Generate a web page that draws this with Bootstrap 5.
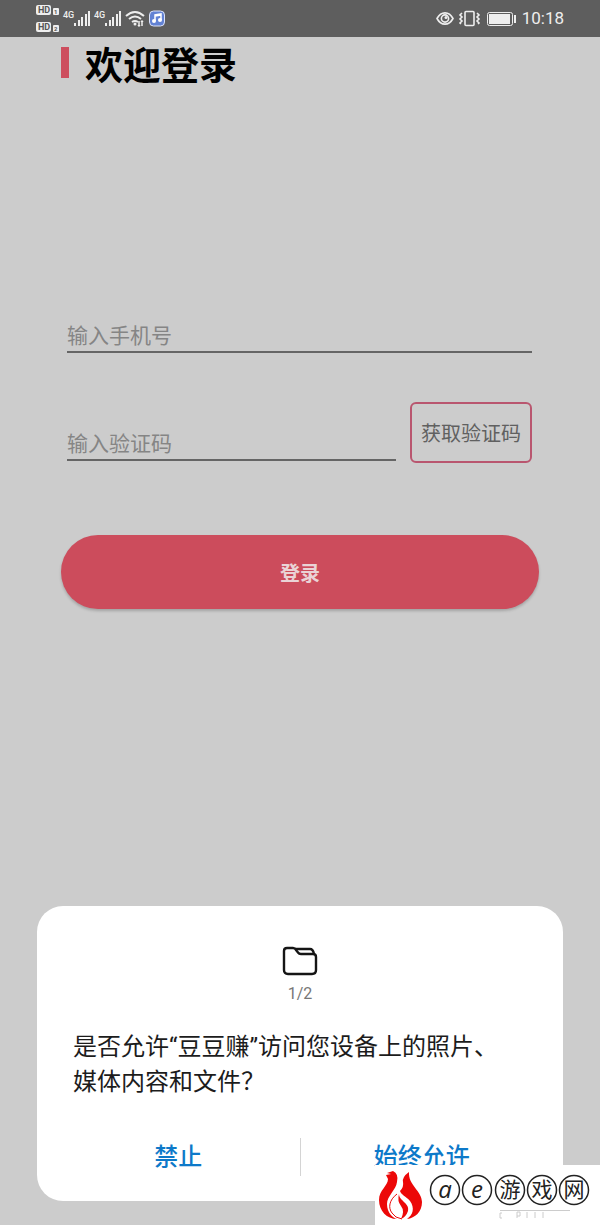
<!DOCTYPE html>
<html lang="zh-CN">
<head>
<meta charset="utf-8">
<meta name="viewport" content="width=device-width, initial-scale=1">
<title>欢迎登录</title>
<link href="https://cdn.jsdelivr.net/npm/bootstrap@5.3.0/dist/css/bootstrap.min.css" rel="stylesheet">
<style>
  body { background: #ccc; font-family: Roboto, "Noto Sans CJK SC", sans-serif; }
  .status-bar { height: 37px; background: #5e5e5e; color: #eee; padding: 0 36px; font-size: 17px; line-height: 37px; }
  .status-bar svg { display: block; flex: none; }
  .login { padding: 0 61px; }
  .title-bar { width: 8px; height: 31px; background: #cd4e5e; margin-top: 10px; }
  .login-title { font-size: 38px; line-height: 58px; font-weight: 700; color: #000; }
  .login-form { margin-top: 213px; }
  .fields { padding: 0 7px 0 6px; }
  .line-input { border: 0; border-bottom: 2px solid #656565; border-radius: 0; background: transparent; padding: 9px 0 0; height: 45px; font-family: "Noto Sans CJK SC", sans-serif; font-size: 21px; line-height: 34px; }
  .line-input:focus { background: transparent; box-shadow: none; border-color: #cd4e5e; }
  .line-input::placeholder { color: #858585; line-height: 34px; }
  .code-row { margin-top: 49px; }
  .code-gap { gap: 14px; }
  .code-field { padding-bottom: 2px; }
  .code-btn { width: 122px; height: 61px; border: 2px solid #b9566f; border-radius: 6px; padding: 3px 0 0; font-size: 20px; color: #606060; }
  .login-btn { height: 74px; margin-top: 72px; padding: 3px 0 0; background: #cc4c5c; color: #ead3d6; font-size: 20px; font-weight: 700; box-shadow: 0 2px 3px #0003; }
  .permission { margin: 48px 37px 24px; padding: 36px 36px 25px; background: #fff; border-radius: 26px; }
  .step { font-size: 16px; line-height: 24px; color: #777; margin-top: 2px; }
  .message { font-size: 24px; line-height: 35px; color: #1c1c1c; margin: 24px 0 38px; }
  .choice { color: #0d79c9; font-size: 24px; line-height: 36px; font-weight: 500; padding: 0; }
  .divider { width: 1px; height: 38px; background: #d4d4d4; }
  .watermark { position: absolute; right: 0; bottom: 0; width: 225px; height: 60px; background: #fff; }
</style>
</head>
<body>
<div class="position-relative d-flex flex-column min-vh-100">
  <header class="status-bar d-flex justify-content-between align-items-center">
    <svg width="130" height="37" viewBox="36 0 130 37" fill="none" stroke="#eee" aria-hidden="true">
      <g fill="#eee" stroke="none"><rect x="36" y="5" width="15" height="10" rx="2"/><rect x="53" y="8" width="6" height="7" rx="1"/><rect x="36" y="22" width="15" height="10" rx="2"/><rect x="53" y="25" width="6" height="7" rx="1"/></g>
      <g fill="#555" stroke="none" font-family="Roboto" font-weight="700"><text x="38" y="13" font-size="9">HD</text><text x="38" y="30" font-size="9">HD</text><text x="54" y="14" font-size="6">1</text><text x="54" y="31" font-size="6">2</text></g>
      <g fill="#eee" stroke="none" font-family="Roboto" font-weight="500" font-size="9"><text x="63" y="18">4G</text><text x="94" y="18">4G</text></g>
      <path stroke-width="2" d="M75 26v-3M79 26v-6M82 26v-9M86 26v-12M89 26v-15M106 26v-3M110 26v-6M113 26v-9M117 26v-12M120 26v-15"/>
      <path stroke-width="2" d="M126 16Q135 8 144 16M129 19Q135 14 141 19M132 22Q135 20 138 22"/>
      <circle cx="135" cy="24" r="1.5" fill="#eee" stroke="none"/>
      <path stroke-width="1.5" d="M139 21v5M142 26v-5M138 25l1 1 1-1M141 22l1-1 1 1"/>
      <rect x="149.500" y="11" width="15" height="15" rx="4" fill="#6282d4" stroke="#dce3fa"/>
      <path stroke="#fff" stroke-width="1.5" d="M155 21v-6l6-1v6M155 16l6-1"/>
      <circle cx="154" cy="21" r="2" fill="#fff" stroke="none"/><circle cx="160" cy="20" r="2" fill="#fff" stroke="none"/>
    </svg>
    <div class="d-flex align-items-center gap-1">
      <svg width="82" height="37" viewBox="436 0 82 37" fill="none" stroke="#eee" stroke-width="1.600" aria-hidden="true">
        <path d="M437 18.500C441 11 449 11 453 18.500C449 26 441 26 437 18.500Z"/><circle cx="445" cy="18.500" r="3.600"/><circle cx="446" cy="17.500" r="1.500" fill="#eee" stroke="none"/>
        <rect x="465" y="11.500" width="9" height="14" rx="1"/>
        <path d="M462 13l-2 2 2 2-2 2 2 2-2 2 1 1M477 13l2 2-2 2 2 2-2 2 2 2-1 1"/>
        <rect x="487.500" y="12.500" width="25" height="13" rx="2" stroke-width="1"/><rect x="489" y="14" width="21" height="10" fill="#eee" stroke="none"/><path stroke-width="2" d="M515 15v8"/>
      </svg>
      <time>10:18</time>
    </div>
  </header>

  <main class="login">
    <div class="d-flex gap-3">
      <span class="title-bar"></span>
      <h1 class="login-title mb-0">欢迎登录</h1>
    </div>
    <form class="login-form">
      <div class="fields">
        <label class="visually-hidden" for="phone">手机号</label>
        <input class="form-control line-input" id="phone" type="tel" placeholder="输入手机号">
        <div class="code-row code-gap d-flex align-items-end">
          <div class="code-field flex-grow-1">
            <label class="visually-hidden" for="code">验证码</label>
            <input class="form-control line-input" id="code" type="text" placeholder="输入验证码">
          </div>
          <button class="btn code-btn flex-shrink-0" type="button">获取验证码</button>
        </div>
      </div>
      <button class="btn login-btn rounded-pill w-100" type="submit">登录</button>
    </form>
  </main>

  <section class="permission mt-auto" role="dialog" aria-labelledby="question">
    <div class="text-center">
      <svg class="d-block mx-auto" width="38" height="38" viewBox="0 0 38 38" fill="none" stroke="#151515" stroke-width="2.400" stroke-linejoin="round" aria-hidden="true">
        <path d="M6 6H12Q14 6 15 8L17 10.500Q18 12 20 12H32Q35 12 35 15V28Q35 32 31 32H7Q3 32 3 28V9Q3 6 6 6Z"/><path d="M14 7H29Q32 7 33 12"/>
      </svg>
      <div class="step">1/2</div>
    </div>
    <p class="message" id="question">是否允许“豆豆赚”访问您设备上的照片、<br>媒体内容和文件？</p>
    <div class="d-flex align-items-center">
      <button class="btn choice flex-fill w-50 pe-3" type="button">禁止</button>
      <span class="divider"></span>
      <button class="btn choice flex-fill w-50 ps-3" type="button">始终允许</button>
    </div>
  </section>

  <aside class="watermark">
    <svg class="d-block" width="225" height="60" viewBox="0 0 225 60" role="img" aria-label="ae游戏网">
      <g fill="#ec0808">
        <path d="M12 8L18 6Q24 9 22 17C21 25 12 31 12 39C12 48 18 53 22 54C12 54 4 46 4 35C4 25 13 21 13 14L11 10L16 9Z"/>
        <path d="M34 7C33 20 47 26 47 37C47 47 40 53 32 54C38 50 40 43 35 36C31 31 26 30 25 26Q29 22 28 17Q27 12 34 7Z"/>
        <path d="M24 29C24 36 35 38 33 46Q31 52 26 54Q30 46 26 41Q22 36 24 29Z"/>
      </g>
      <path fill="none" stroke="#ec0808" d="M22 29C14 35 13 43 17 48Q20 53 27 54"/>
      <g fill="#fff" stroke="#222" stroke-width="1.500"><circle cx="70" cy="25" r="14.500"/><circle cx="102" cy="25" r="14.500"/><circle cx="135" cy="25" r="14.500"/><circle cx="167" cy="25" r="14.500"/><circle cx="199" cy="25" r="14.500"/></g>
      <g fill="#222" text-anchor="middle" font-family="'Open Sans', sans-serif" font-style="italic" font-size="24"><text x="70" y="33">a</text><text x="102" y="33">e</text></g>
      <g fill="#222" text-anchor="middle" font-family="'Noto Sans CJK SC', sans-serif" font-size="21"><text x="135" y="32">游</text><text x="167" y="32">戏</text><text x="199" y="32">网</text></g>
      <path fill="none" stroke="#ccc" d="M125 45.500h70M127 48h-2v5h2M142 53v-6h3v4h-3M152 47v6M160 47v6M168 47v6"/>
    </svg>
  </aside>
</div>
<script src="https://cdn.jsdelivr.net/npm/bootstrap@5.3.0/dist/js/bootstrap.bundle.min.js"></script>
</body>
</html>
